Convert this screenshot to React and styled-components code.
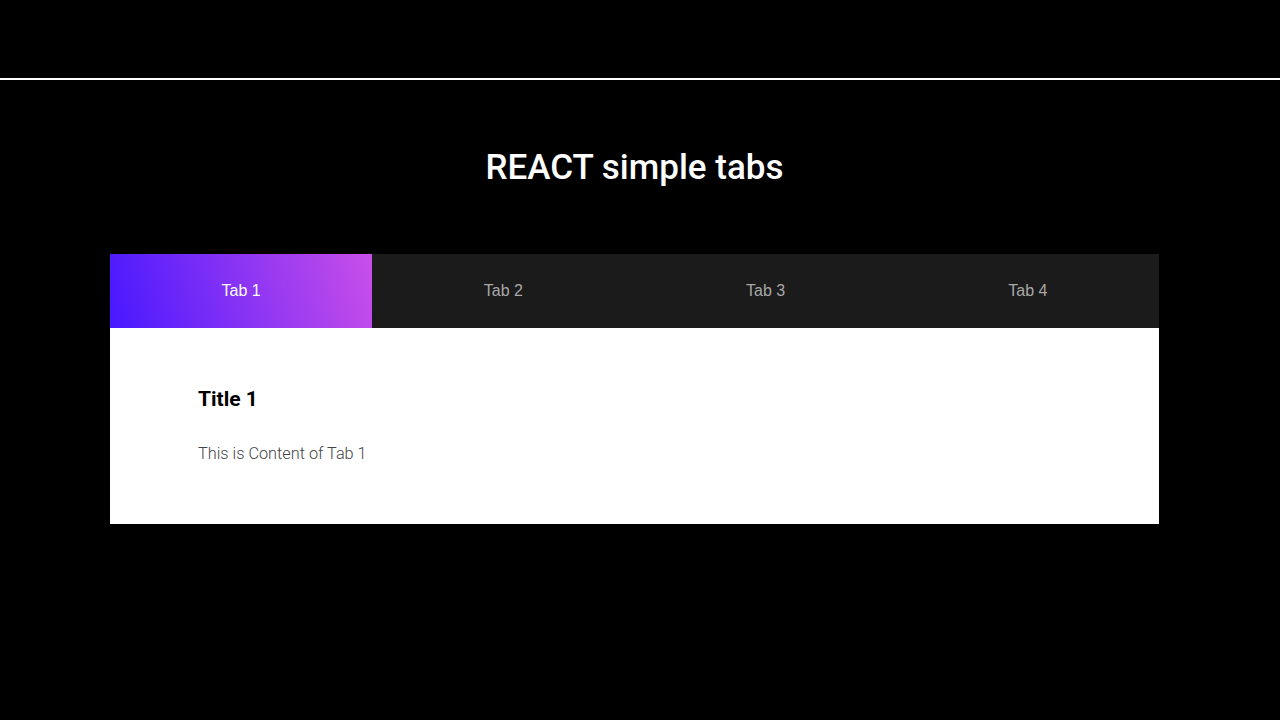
import React, { useState } from "react";
import styled, { createGlobalStyle } from "styled-components";

const Global = createGlobalStyle`
  body {
    margin: 0;
    background: #000;
    font-family: Roboto, "Liberation Sans", sans-serif;
  }
`;

const Page = styled.div`
  min-height: 720px;
  background: #000;
`;

const TopBar = styled.div`
  height: 78px;
  border-bottom: 2px solid #fff;
`;

const Main = styled.main`
  width: 1269px;
`;

const Heading = styled.h1`
  margin: 0;
  padding-top: 67px;
  text-align: center;
  color: #fff;
  font-family: Roboto, sans-serif;
  font-size: 35px;
  font-weight: 500;
  line-height: 42px;
`;

const Tabs = styled.div`
  width: 1049px;
  margin: 65px auto 0;
`;

const TabRow = styled.div`
  display: flex;
  background: #1b1b1b;
`;

const Tab = styled.button`
  flex: 1;
  height: 74px;
  border: none;
  padding: 0;
  cursor: pointer;
  font-family: "Liberation Sans", Arial, sans-serif;
  font-size: 16px;
  color: ${(p) => (p.$active ? "#fff" : "#a8a8a8")};
  background: ${(p) =>
    p.$active ? "linear-gradient(75deg, #4818ff, #c94fe9)" : "transparent"};
`;

const Panel = styled.div`
  background: #fff;
  height: 196px;
  padding: 56px 88px 0;
  box-sizing: border-box;
`;

const Title = styled.h2`
  margin: 0;
  font-family: Roboto, sans-serif;
  font-size: 21px;
  font-weight: 700;
  color: #000;
  line-height: 30px;
`;

const Text = styled.p`
  margin: 30px 0 0;
  font-family: Roboto, sans-serif;
  font-size: 16.3px;
  font-weight: 300;
  color: #444;
  line-height: 20px;
`;

const tabs = [1, 2, 3, 4];

export default function App() {
  const [active, setActive] = useState(1);
  return (
    <Page>
      <Global />
      <TopBar />
      <Main>
        <Heading>REACT simple tabs</Heading>
        <Tabs>
          <TabRow>
            {tabs.map((t) => (
              <Tab key={t} $active={active === t} onClick={() => setActive(t)}>
                Tab {t}
              </Tab>
            ))}
          </TabRow>
          <Panel>
            <Title>Title {active}</Title>
            <Text>This is Content of Tab {active}</Text>
          </Panel>
        </Tabs>
      </Main>
    </Page>
  );
}
